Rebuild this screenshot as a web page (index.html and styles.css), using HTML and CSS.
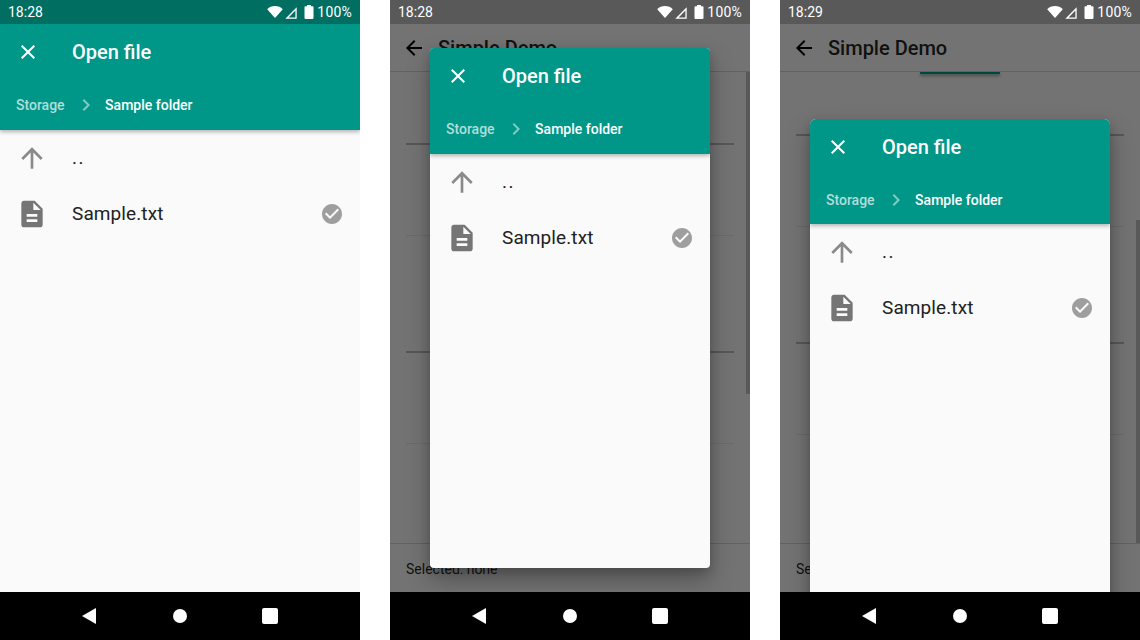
FILE: index.html
```html
<!DOCTYPE html>
<html lang="en">
<head>
<meta charset="utf-8">
<title>Open file dialog</title>
<link rel="stylesheet" href="styles.css">
</head>
<body>
<svg class="defs" width="0" height="0" aria-hidden="true">
  <symbol id="i-close" viewBox="0 0 24 24"><path d="M19 6.41L17.59 5 12 10.59 6.41 5 5 6.41 10.59 12 5 17.59 6.41 19 12 13.41 17.59 19 19 17.59 13.41 12z"/></symbol>
  <symbol id="i-chevron" viewBox="0 0 24 24"><path d="M10 6L8.59 7.41 13.17 12l-4.58 4.59L10 18l6-6z"/></symbol>
  <symbol id="i-up" viewBox="0 0 24 24"><path d="M4 12l1.41 1.41L11 7.83V20h2V7.83l5.58 5.59L20 12l-8-8-8 8z"/></symbol>
  <symbol id="i-file" viewBox="0 0 24 24"><path d="M14 2H6c-1.1 0-1.99.9-1.99 2L4 20c0 1.1.89 2 1.99 2H18c1.1 0 2-.9 2-2V8l-6-6zm2 16H8v-2h8v2zm0-4H8v-2h8v2zm-3-5V3.5L18.5 9H13z"/></symbol>
  <symbol id="i-check" viewBox="0 0 24 24"><path d="M12 2C6.48 2 2 6.48 2 12s4.48 10 10 10 10-4.48 10-10S17.52 2 12 2zm-2 15l-5-5 1.41-1.41L10 14.17l7.59-7.59L19 8l-9 9z"/></symbol>
  <symbol id="i-back" viewBox="0 0 24 24"><path d="M20 11H7.83l5.59-5.59L12 4l-8 8 8 8 1.41-1.41L7.83 13H20v-2z"/></symbol>
  <symbol id="i-wifi" viewBox="0 0 16 12"><path d="M8 12L.2 3.2C2.2 1.3 5 .1 8 .1s5.8 1.2 7.8 3.1z"/></symbol>
  <symbol id="i-signal" viewBox="0 0 12 12"><path fill-rule="evenodd" d="M.3 11.7L11.7.3v11.4zM3.6 10.4h6.8V3.6z"/></symbol>
  <symbol id="i-battery" viewBox="0 0 10 14"><path d="M3 0h4v1.2h1.6c.5 0 .9.4.9.9v11c0 .5-.4.9-.9.9H1.4c-.5 0-.9-.4-.9-.9v-11c0-.5.4-.9.9-.9H3z"/></symbol>
</svg>

<main class="shots">

  <section class="phone">
    <div class="status status-teal">
      <span class="clock">18:28</span>
      <svg class="st-wifi"><use href="#i-wifi"/></svg>
      <svg class="st-signal"><use href="#i-signal"/></svg>
      <svg class="st-battery"><use href="#i-battery"/></svg>
      <span class="pct">100%</span>
    </div>
    <div class="screen">
      <div class="chooser chooser-full">
        <header class="head">
          <div class="toolbar"><svg class="ic24"><use href="#i-close"/></svg><h2 class="title">Open file</h2></div>
          <div class="crumbs"><span class="crumb-dim">Storage</span><svg class="ic24 chev"><use href="#i-chevron"/></svg><span class="crumb">Sample folder</span></div>
        </header>
        <ul class="files">
          <li class="file"><svg class="ic32 up"><use href="#i-up"/></svg><span class="name name-parent">..</span></li>
          <li class="file"><svg class="ic32 doc"><use href="#i-file"/></svg><span class="name">Sample.txt</span><svg class="ic24 chk"><use href="#i-check"/></svg></li>
        </ul>
      </div>
    </div>
    <nav class="nav">
      <svg class="nav-ic" viewBox="0 0 16 16"><path d="M15 0v16L1 8z"/></svg>
      <span class="nav-home"></span>
      <span class="nav-recent"></span>
    </nav>
  </section>

  <section class="phone">
    <div class="status status-dim">
      <span class="clock">18:28</span>
      <svg class="st-wifi"><use href="#i-wifi"/></svg>
      <svg class="st-signal"><use href="#i-signal"/></svg>
      <svg class="st-battery"><use href="#i-battery"/></svg>
      <span class="pct">100%</span>
    </div>
    <div class="screen">
      <div class="demo">
        <div class="appbar"><svg class="ic24"><use href="#i-back"/></svg><h1 class="demo-title">Simple Demo</h1></div>
        <div class="demo-body body-a">
          <div class="rule r1"></div><div class="rule r2 faint"></div><div class="rule r3"></div><div class="rule r4 faint"></div>
        </div>
        <div class="demo-foot">Selected: none</div>
      </div>
      <div class="scrim"></div>
      <div class="thumb thumb-a"></div>
      <div class="chooser dialog dialog-a">
        <header class="head">
          <div class="toolbar"><svg class="ic24"><use href="#i-close"/></svg><h2 class="title">Open file</h2></div>
          <div class="crumbs"><span class="crumb-dim">Storage</span><svg class="ic24 chev"><use href="#i-chevron"/></svg><span class="crumb">Sample folder</span></div>
        </header>
        <ul class="files">
          <li class="file"><svg class="ic32 up"><use href="#i-up"/></svg><span class="name name-parent">..</span></li>
          <li class="file"><svg class="ic32 doc"><use href="#i-file"/></svg><span class="name">Sample.txt</span><svg class="ic24 chk"><use href="#i-check"/></svg></li>
        </ul>
      </div>
    </div>
    <nav class="nav">
      <svg class="nav-ic" viewBox="0 0 16 16"><path d="M15 0v16L1 8z"/></svg>
      <span class="nav-home"></span>
      <span class="nav-recent"></span>
    </nav>
  </section>

  <section class="phone">
    <div class="status status-dim">
      <span class="clock">18:29</span>
      <svg class="st-wifi"><use href="#i-wifi"/></svg>
      <svg class="st-signal"><use href="#i-signal"/></svg>
      <svg class="st-battery"><use href="#i-battery"/></svg>
      <span class="pct">100%</span>
    </div>
    <div class="screen">
      <div class="demo">
        <div class="appbar"><svg class="ic24"><use href="#i-back"/></svg><h1 class="demo-title">Simple Demo</h1></div>
        <div class="demo-body body-b">
          <div class="demo-btn"></div>
          <div class="rule r1 r1-b"></div><div class="rule r2 faint"></div><div class="rule r3"></div><div class="rule r4 faint"></div>
        </div>
        <div class="demo-foot">Selected: none</div>
      </div>
      <div class="scrim"></div>
      <div class="thumb thumb-b"></div>
      <div class="chooser dialog dialog-b">
        <header class="head">
          <div class="toolbar"><svg class="ic24"><use href="#i-close"/></svg><h2 class="title">Open file</h2></div>
          <div class="crumbs"><span class="crumb-dim">Storage</span><svg class="ic24 chev"><use href="#i-chevron"/></svg><span class="crumb">Sample folder</span></div>
        </header>
        <ul class="files">
          <li class="file"><svg class="ic32 up"><use href="#i-up"/></svg><span class="name name-parent">..</span></li>
          <li class="file"><svg class="ic32 doc"><use href="#i-file"/></svg><span class="name">Sample.txt</span><svg class="ic24 chk"><use href="#i-check"/></svg></li>
        </ul>
      </div>
    </div>
    <nav class="nav">
      <svg class="nav-ic" viewBox="0 0 16 16"><path d="M15 0v16L1 8z"/></svg>
      <span class="nav-home"></span>
      <span class="nav-recent"></span>
    </nav>
  </section>

</main>
</body>
</html>
```

FILE: styles.css
```css
* { box-sizing: border-box; }
html, body { margin: 0; padding: 0; background: #fff; }
body { width: 1140px; height: 640px; overflow: hidden; font-family: Roboto, "Noto Sans", sans-serif; }
.defs { position: absolute; }
svg { display: block; flex: none; fill: currentColor; }

.shots { display: flex; gap: 30px; height: 640px; }
.phone { width: 360px; height: 640px; display: flex; flex-direction: column; }

/* status bar */
.status { height: 24px; flex: none; display: flex; align-items: center; padding: 0 8px; color: #fff; font-size: 14px; }
.status-teal { background: #006f62; }
.status-dim { background: #595959; }
.clock { margin-right: auto; }
.st-wifi { width: 16px; height: 12px; }
.st-signal { width: 12px; height: 12px; margin-left: 2px; margin-top: 1px; }
.st-battery { width: 10px; height: 14px; margin-left: 7px; margin-top: -1px; }
.pct { margin-left: 3px; letter-spacing: .2px; }

/* screen */
.screen { position: relative; flex: 1; min-height: 0; overflow: hidden; background: #fafafa; }
.chooser { display: flex; flex-direction: column; background: #fafafa; }
.chooser-full { height: 100%; }
.dialog { position: absolute; box-shadow: 0 12px 24px rgba(0, 0, 0, .28), 0 4px 10px rgba(0, 0, 0, .16); overflow: hidden; }
.dialog-a { left: 40px; top: 24px; width: 280px; height: 520px; border-radius: 4px; }
.dialog-b { left: 30px; top: 95px; width: 300px; height: 500px; border-radius: 6px; }

/* chooser head */
.head { position: relative; z-index: 1; flex: none; height: 106px; background: #009688; color: #fff; box-shadow: 0 2px 4px rgba(0, 0, 0, .28); }
.dialog-b .head { height: 105px; }
.toolbar { display: flex; align-items: center; height: 56px; padding-left: 16px; }
.title { margin: 0 0 0 32px; font-size: 20px; font-weight: 500; line-height: 24px; }
.crumbs { display: flex; align-items: center; height: 50px; padding-left: 16px; font-size: 14px; font-weight: 500; }
.crumb-dim { color: rgba(255, 255, 255, .7); }
.chev { margin: 0 7.5px 0 9px; color: rgba(255, 255, 255, .5); }
.ic24 { width: 24px; height: 24px; }
.ic32 { width: 32px; height: 32px; }

/* list */
.files { list-style: none; margin: 0; padding: 0; }
.file { display: flex; align-items: center; height: 56px; padding: 0 16px; color: #212121; font-size: 19px; line-height: 24px; letter-spacing: .1px; }
.name { margin-left: 24px; flex: 1; margin-top: -1px; }
.name-parent { letter-spacing: 1.5px; }
.up { color: #8a8a8a; }
.doc { color: #757575; }
.chk { color: #9e9e9e; }

/* demo behind the dialog */
.demo { display: flex; flex-direction: column; height: 100%; }
.appbar { display: flex; align-items: center; height: 48px; flex: none; padding-left: 12px; color: #000; border-bottom: 1px solid rgba(0, 0, 0, .14); }
.demo-title { margin: 0 0 0 12px; font-size: 20px; font-weight: 500; color: rgba(0, 0, 0, .87); }
.demo-body { flex: 1; min-height: 0; }
.body-a { padding-top: 71px; }
.body-b { padding-top: 0; }
.demo-btn { width: 80px; height: 2px; margin: 0 auto; background: #009688; box-shadow: 0 2px 3px rgba(0, 0, 0, .4); }
.rule { height: 2px; margin: 0 16px; background: rgba(0, 0, 0, .24); }
.rule.faint { height: 1px; background: rgba(0, 0, 0, .08); }
.r2 { margin-top: 90px; }
.r3 { margin-top: 115px; }
.r4 { margin-top: 90px; }
.r1-b { margin-top: 60px; }
.demo-foot { flex: none; height: 49px; padding: 15px 16px 0; border-top: 1px solid rgba(0, 0, 0, .14); font-size: 14px; line-height: 20px; color: rgba(0, 0, 0, .87); }

.scrim { position: absolute; inset: 0; background: rgba(0, 0, 0, .54); }
.thumb { position: absolute; right: 0; width: 4px; background: rgba(0, 0, 0, .22); }
.thumb-a { top: 48px; height: 322px; }
.thumb-b { top: 196px; height: 323px; }

/* nav bar */
.nav { position: relative; height: 48px; flex: none; background: #000; display: flex; align-items: center; padding-left: 81px; }
.nav-ic { width: 16px; height: 16px; color: #fff; }
.nav-home { width: 14px; height: 14px; margin-left: 76px; border-radius: 50%; background: #fff; }
.nav-recent { width: 16px; height: 16px; margin-left: 75px; border-radius: 2px; background: #fff; }
```
